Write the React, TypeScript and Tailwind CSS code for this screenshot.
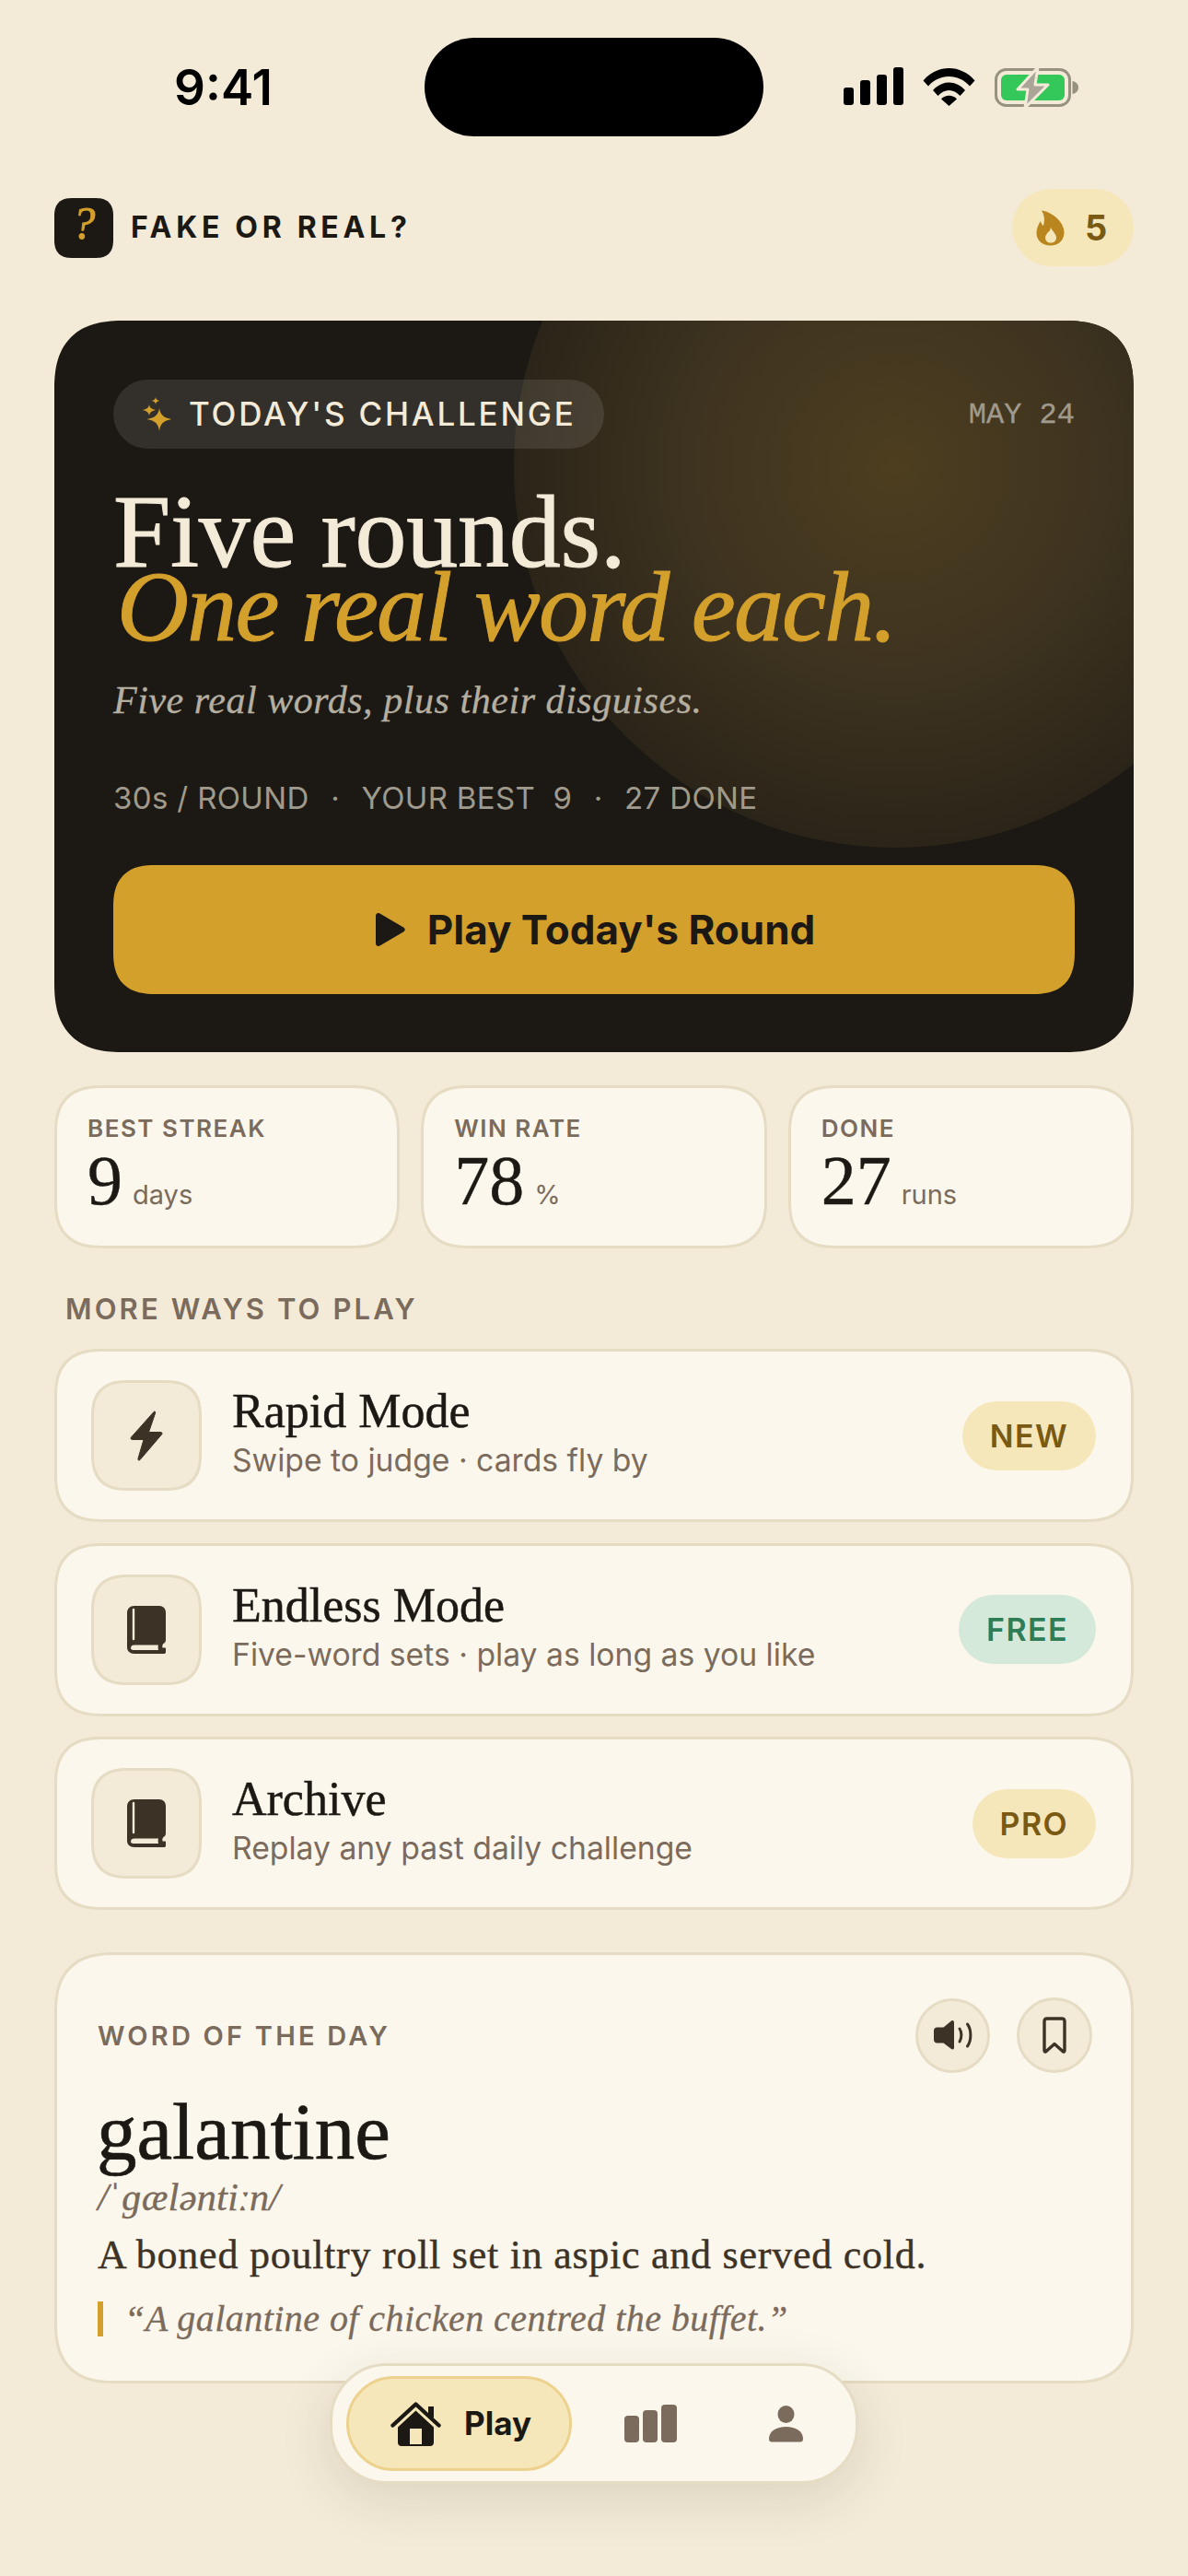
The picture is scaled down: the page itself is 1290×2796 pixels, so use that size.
import type { ReactNode } from 'react'

const serif = "font-['Liberation_Serif',serif]"
const sans = "font-['Inter',sans-serif]"
const squircle = '[corner-shape:superellipse(1.35)]'

function SignalIcon() {
  return (
    <div className="flex items-end gap-[7px] h-[41px]">
      <div className="w-[11px] h-[19px] rounded-[3px] bg-black" />
      <div className="w-[11px] h-[27px] rounded-[3px] bg-black" />
      <div className="w-[11px] h-[33px] rounded-[3px] bg-black" />
      <div className="w-[11px] h-[41px] rounded-[3px] bg-black" />
    </div>
  )
}

function WifiIcon() {
  return (
    <svg width="57" height="42" viewBox="0 0 57 42" fill="black">
      <path d="M0.5 14.5C15.5 -3.5 41.5 -3.5 56.5 14.5L51 20.5C39 6.5 18 6.5 6 20.5Z" />
      <path d="M11 25C21 13.5 36 13.5 46 25L40.5 31C33.5 23 23.5 23 16.5 31Z" />
      <path d="M20 34.5C24.5 29.5 32.5 29.5 37 34.5L28.5 42Z" />
    </svg>
  )
}

function BatteryIcon() {
  return (
    <svg width="92" height="44" viewBox="0 0 92 44">
      <rect x="1.5" y="2.5" width="80" height="39" rx="11" fill="none" stroke="#97917f" strokeWidth="3" />
      <rect x="7" y="8" width="69" height="28" rx="6" fill="#34c759" />
      <path d="M84.5 15C88 15.5 91 18 91 22C91 26 88 28.5 84.5 29Z" fill="#97917f" />
      <path d="M47 0L25 24H36L33 44L58 19H44Z" fill="#aaa598" stroke="#f3ead8" strokeWidth="3" strokeLinejoin="round" />
    </svg>
  )
}

function FlameIcon() {
  return (
    <svg width="31" height="39" viewBox="0 0 31 39">
      <path
        d="M6 0.5C15 1 31 12 30.5 25C30.2 33.5 23.5 38.5 15.5 38.5C7 38.5 0.5 33 0.5 25C0.5 20 2.5 15.5 5 12C5.5 14.5 6.5 16 8 17C9.5 11.5 9.5 6 6 0.5Z"
        fill="#b8851f"
      />
      <path
        d="M16 19C17.5 23 22 25.5 22 30C22 33.5 19.5 35.5 16 35.5C12.5 35.5 10 33.5 10 30C10 27 12 26 13 24C14.5 23.5 15.5 21.5 16 19Z"
        fill="#f6e7ba"
      />
    </svg>
  )
}

function SparkleIcon() {
  return (
    <svg width="32" height="37" viewBox="0 0 32 37" fill="#d4a02c">
      <path d="M18 12C19 19 22.5 22.5 31.5 24C22.5 25.5 19 29 18 37C17 29 13.5 25.5 4.5 24C13.5 22.5 17 19 18 12Z" />
      <path d="M7 8C7.5 11.5 9.5 13 14 14C9.5 15 7.5 16.5 7 20.5C6.5 16.5 4.5 15 0 14C4.5 13 6.5 11.5 7 8Z" />
      <path d="M14 0C14.3 2.5 15.5 3.5 18.5 4C15.5 4.5 14.3 5.5 14 8C13.7 5.5 12.5 4.5 9.5 4C12.5 3.5 13.7 2.5 14 0Z" />
    </svg>
  )
}

function BoltIcon() {
  return (
    <svg width="36" height="55" viewBox="0 0 36 55" fill="#3d3226">
      <path
        d="M26 1.5L1.5 29C0.5 30.2 1.2 31.5 2.5 31.5H15L9 52C8.5 54 10 54.5 11 53.5L34.5 26C35.5 24.8 35 23.5 33.5 23.5H20.5L27.5 3C28 1 27 0.5 26 1.5Z"
        stroke="#3d3226"
        strokeLinejoin="round"
      />
    </svg>
  )
}

function BookIcon() {
  return (
    <svg width="42" height="52" viewBox="0 0 42 52">
      <path
        d="M8 0H35C39 0 42 3 42 7V37C42 39 41 40 39.5 41C38.5 42 38 43.5 38.5 45.5H41C42 45.5 42 46 42 47V50C42 51.5 41 52 40 52H8C3 52 0 49 0 45V8C0 3 3 0 8 0Z"
        fill="#3d3226"
      />
      <path d="M7 4V36" stroke="#f3ead8" strokeWidth="2.4" strokeLinecap="round" />
      <path d="M4 46C4 43.5 5.5 42.5 8 42.5H34C33.5 44 33.5 46 34 48H8C5.5 48 4 47.5 4 46Z" fill="#f3ead8" />
    </svg>
  )
}

function SpeakerIcon() {
  return (
    <svg width="42" height="32" viewBox="0 0 42 32">
      <path
        d="M19 0.5C21 -0.5 22 0.5 22 2.5V29.5C22 31.5 20.5 32 19 31L10.5 24.5H3.5C1.5 24.5 0 23 0 21V11C0 9 1.5 7.5 3.5 7.5H10.5Z"
        fill="#3d3226"
      />
      <path d="M28 9C30.5 12.5 30.5 19 28 23" fill="none" stroke="#3d3226" strokeWidth="3" strokeLinecap="round" />
      <path d="M36.5 4C41 10 41 22 36.5 28" fill="none" stroke="#3d3226" strokeWidth="3" strokeLinecap="round" />
    </svg>
  )
}

function BookmarkIcon() {
  return (
    <svg width="26" height="40" viewBox="0 0 26 40">
      <path
        d="M5 2H21C23 2 24 3 24 5V36.5C24 38 23 38.5 22 37.5L13 29.5L4 37.5C3 38.5 2 38 2 36.5V5C2 3 3 2 5 2Z"
        fill="none"
        stroke="#3d3226"
        strokeWidth="3.4"
        strokeLinejoin="round"
      />
    </svg>
  )
}

function HomeIcon() {
  return (
    <svg width="55" height="48" viewBox="0 0 55 48">
      <path d="M2.5 25.5L27.5 2.5L52.5 25.5" fill="none" stroke="#1c1914" strokeWidth="4.4" strokeLinecap="round" strokeLinejoin="round" />
      <rect x="41" y="5" width="6" height="12" fill="#1c1914" />
      <path d="M27.5 9.5L47 27.5V44C47 46.5 45.5 48 43 48H12C9.5 48 8 46.5 8 44V27.5Z" fill="#1c1914" />
      <rect x="21" y="29" width="13" height="17" fill="#f6e7ba" />
    </svg>
  )
}

function BarsIcon() {
  return (
    <div className="flex items-end gap-[4px] h-[41px]">
      <div className="w-[16px] h-[29px] rounded-[4px] bg-[#7b6b5c]" />
      <div className="w-[16px] h-[35px] rounded-[4px] bg-[#7b6b5c]" />
      <div className="w-[17px] h-[41px] rounded-[4px] bg-[#7b6b5c]" />
    </div>
  )
}

function PersonIcon() {
  return (
    <svg width="37" height="40" viewBox="0 0 37 40" fill="#7b6b5c">
      <ellipse cx="18.5" cy="9.5" rx="9" ry="9.5" />
      <path d="M0 36C0 28 8 23 18.5 23C29 23 37 28 37 36C37 38.5 36 39.5 34 39.5H3C1 39.5 0 38.5 0 36Z" />
    </svg>
  )
}

function Stat({ label, value, unit }: { label: string; value: string; unit: string }) {
  return (
    <div className={`flex-1 h-[177px] rounded-[52px] ${squircle} border-[3px] border-[#e6dcc4] bg-[#fbf7ec] pl-[33px] pt-[27px]`}>
      <div className={`${sans} text-[26px] leading-[34px] font-semibold tracking-[1.5px] text-[#7b6b5c]`}>{label}</div>
      <div className="flex items-baseline gap-[11px] mt-[1px]">
        <span className={`${serif} text-[76px] leading-[76px] [-webkit-text-stroke:0.4px] text-[#1c1914]`}>{value}</span>
        <span className={`${sans} text-[29px] text-[#7b6b5c]`}>{unit}</span>
      </div>
    </div>
  )
}

function ModeRow({ icon, title, sub, badge, badgeClass }: { icon: ReactNode; title: string; sub: string; badge: string; badgeClass: string }) {
  return (
    <div className={`flex items-center h-[188px] rounded-[52px] ${squircle} border-[3px] border-[#e6dcc4] bg-[#fbf7ec] pl-[37px] pr-[38px]`}>
      <div className={`flex items-center justify-center w-[120px] h-[120px] rounded-[40px] ${squircle} border-[3px] border-[#e6dcc4] bg-[#f3ead8]`}>{icon}</div>
      <div className="flex-1 ml-[33px] -mt-[7px]">
        <div className={`${serif} text-[52px] leading-[60px] [-webkit-text-stroke:0.5px] text-[#1c1914]`}>{title}</div>
        <div className={`${sans} text-[33.7px] leading-[45px] text-[#7b6b5c]`}>{sub}</div>
      </div>
      <div className={`${sans} flex items-center h-[75px] px-[30px] rounded-full text-[34px] font-semibold tracking-[1.4px] ${badgeClass}`}>{badge}</div>
    </div>
  )
}

export default function App() {
  return (
    <div className="relative w-[1290px] h-[2796px] overflow-hidden bg-[#f3ead8]">
      {/* status bar */}
      <div className="flex h-[205px] pt-[41px]">
        <div className={`${sans} w-[461px] pl-[24px] pt-[2px] h-[107px] flex items-center justify-center text-[53px] font-semibold text-black`}>9:41</div>
        <div className="w-[368px] h-[107px] rounded-full bg-black" />
        <div className="flex items-start gap-[21px] pl-[87px] pt-[32px]">
          <SignalIcon />
          <WifiIcon />
          <BatteryIcon />
        </div>
      </div>

      <div className="px-[59px]">
        {/* header */}
        <div className="flex items-center justify-between h-[84px]">
          <div className="flex items-center gap-[19px]">
            <div className={`${serif} flex justify-center w-[64px] h-[65px] rounded-[20px] ${squircle} bg-[#1c1914] text-[50px] leading-[54px] italic [-webkit-text-stroke:0.8px] text-[#d4a02c]`}>?</div>
            <div className={`${sans} text-[32px] font-bold tracking-[4.7px] text-[#1c1914]`}>FAKE OR REAL?</div>
          </div>
          <div className="flex items-center gap-[22px] h-[84px] w-[132px] pl-[26px] rounded-[42px] bg-[#f6e7ba]">
            <FlameIcon />
            <span className={`${sans} text-[38px] font-bold text-[#7a5a12]`}>5</span>
          </div>
        </div>

        {/* hero */}
        <div className={`relative mt-[59px] h-[794px] overflow-hidden rounded-[76px] ${squircle} bg-[#1c1914] px-[64px] pt-[64px]`}>
          <div className="absolute left-[499px] top-[-256px] w-[828px] h-[828px] rounded-full bg-[radial-gradient(circle_closest-side,#4d3e1f_0%,#3e3320_55%,#2b2418_100%)]" />
          <div className="relative">
            <div className="flex items-center justify-between">
              <div className="flex items-center gap-[18px] h-[75px] pl-[32px] w-[533px] rounded-full bg-[#ffffff1a]">
                <SparkleIcon />
                <span className={`${sans} text-[35px] font-medium tracking-[2.8px] text-[#f3ead8]`}>TODAY'S CHALLENGE</span>
              </div>
              <span className="font-['Liberation_Mono',monospace] pt-[2px] text-[32px] [-webkit-text-stroke:0.3px] text-[#a09a8c]">MAY 24</span>
            </div>
            <div className={`${serif} mt-[50px] text-[112px] leading-[81px] tracking-[-0.3px] [-webkit-text-stroke:1px] text-[#f3ead8]`}>Five rounds.</div>
            <div className={`${serif} pl-[4px] text-[108px] leading-[81px] tracking-[-1.8px] italic [-webkit-text-stroke:1px] text-[#d4a02c]`}>One real word each.</div>
            <div className={`${serif} mt-[33px] text-[42px] leading-[56px] tracking-[0.55px] italic [-webkit-text-stroke:0.3px] text-[#b5afa1]`}>Five real words, plus their disguises.</div>
            <div className={`${sans} mt-[58px] flex items-center gap-[23.5px] text-[33px] leading-[40px] tracking-[0.35px] text-[#a09a8c]`}>
              <span>30s / ROUND</span>
              <span>·</span>
              <span>YOUR BEST&nbsp; 9</span>
              <span>·</span>
              <span>27 DONE</span>
            </div>
            <div className={`mt-[53px] flex items-center justify-center gap-[24px] pl-[3px] h-[140px] rounded-[46px] ${squircle} bg-[#d4a02c]`}>
              <svg width="32" height="36" viewBox="0 0 32 36" fill="#1c1914">
                <path d="M0 3C0 0.5 2.5 -0.8 4.5 0.5L30 15.5C32.3 17 32.3 19 30 20.5L4.5 35.5C2.5 36.8 0 35.5 0 33Z" />
              </svg>
              <span className={`${sans} text-[44px] font-bold text-[#1c1914]`}>Play Today's Round</span>
            </div>
          </div>
        </div>

        {/* stats */}
        <div className="flex gap-[23px] mt-[36px]">
          <Stat label="BEST STREAK" value="9" unit="days" />
          <Stat label="WIN RATE" value="78" unit="%" />
          <Stat label="DONE" value="27" unit="runs" />
        </div>

        <div className={`${sans} mt-[46px] ml-[12px] text-[31px] leading-[40px] font-semibold tracking-[3.1px] text-[#7b6b5c]`}>MORE WAYS TO PLAY</div>

        {/* modes */}
        <div className="flex flex-col gap-[22.5px] mt-[23px]">
          <ModeRow icon={<BoltIcon />} title="Rapid Mode" sub="Swipe to judge · cards fly by" badge="NEW" badgeClass="bg-[#f6e7ba] text-[#7a5a12]" />
          <ModeRow icon={<BookIcon />} title="Endless Mode" sub="Five-word sets · play as long as you like" badge="FREE" badgeClass="bg-[#d4e9da] text-[#2f7d57]" />
          <ModeRow icon={<BookIcon />} title="Archive" sub="Replay any past daily challenge" badge="PRO" badgeClass="bg-[#f6e7ba] text-[#7a5a12]" />
        </div>

        {/* word of the day */}
        <div className={`mt-[46px] h-[468px] rounded-[66px] ${squircle} border-[3px] border-[#e6dcc4] bg-[#fbf7ec] pl-[44px] pr-[42px] pt-[46px]`}>
          <div className="flex items-center justify-between">
            <span className={`${sans} pt-[2px] text-[29px] font-semibold tracking-[3.2px] text-[#7b6b5c]`}>WORD OF THE DAY</span>
            <div className="flex items-center gap-[29px]">
              <div className="flex items-center justify-center w-[81px] h-[81px] rounded-full border-[3px] border-[#e6dcc4] bg-[#f3ead8]">
                <SpeakerIcon />
              </div>
              <div className="flex items-center justify-center w-[82px] h-[82px] rounded-full border-[3px] border-[#e6dcc4] bg-[#f3ead8]">
                <BookmarkIcon />
              </div>
            </div>
          </div>
          <div className={`${serif} -ml-[1px] mt-[19px] text-[87px] leading-[90px] [-webkit-text-stroke:0.7px] text-[#1c1914]`}>galantine</div>
          <div className={`${serif} pt-[3px] text-[43px] leading-[46px] italic [-webkit-text-stroke:0.3px] text-[#7b6b5c]`}>/ˈɡæləntiːn/</div>
          <div className={`${serif} mt-[13px] text-[44px] leading-[54px] tracking-[0.75px] [-webkit-text-stroke:0.4px] text-[#3d3226]`}>A boned poultry roll set in aspic and served cold.</div>
          <div className="mt-[23px] border-l-[6px] border-[#d4a02c] pl-[23px]">
            <div className={`${serif} text-[40px] leading-[38px] tracking-[0.45px] italic [-webkit-text-stroke:0.3px] text-[#7b6b5c]`}>“A galantine of chicken centred the buffet.”</div>
          </div>
        </div>
      </div>

      {/* floating nav */}
      <div className="absolute left-[358px] top-[2565px] flex items-center w-[574px] h-[131px] rounded-[62px] border-[3px] border-[#e6dcc4] bg-[#fbf7ec] shadow-[0_16px_60px_rgba(60,45,20,0.12)] pl-[15px]">
        <div className="flex items-center gap-[25px] w-[245px] h-[103px] pl-[45px] rounded-[52px] border-[3px] border-[#ecd28e] bg-[#f6e7ba]">
          <HomeIcon />
          <span className={`${sans} text-[35px] font-bold text-[#1c1914]`}>Play</span>
        </div>
        <div className="ml-[57px]"><BarsIcon /></div>
        <div className="ml-[100px]"><PersonIcon /></div>
      </div>
    </div>
  )
}
